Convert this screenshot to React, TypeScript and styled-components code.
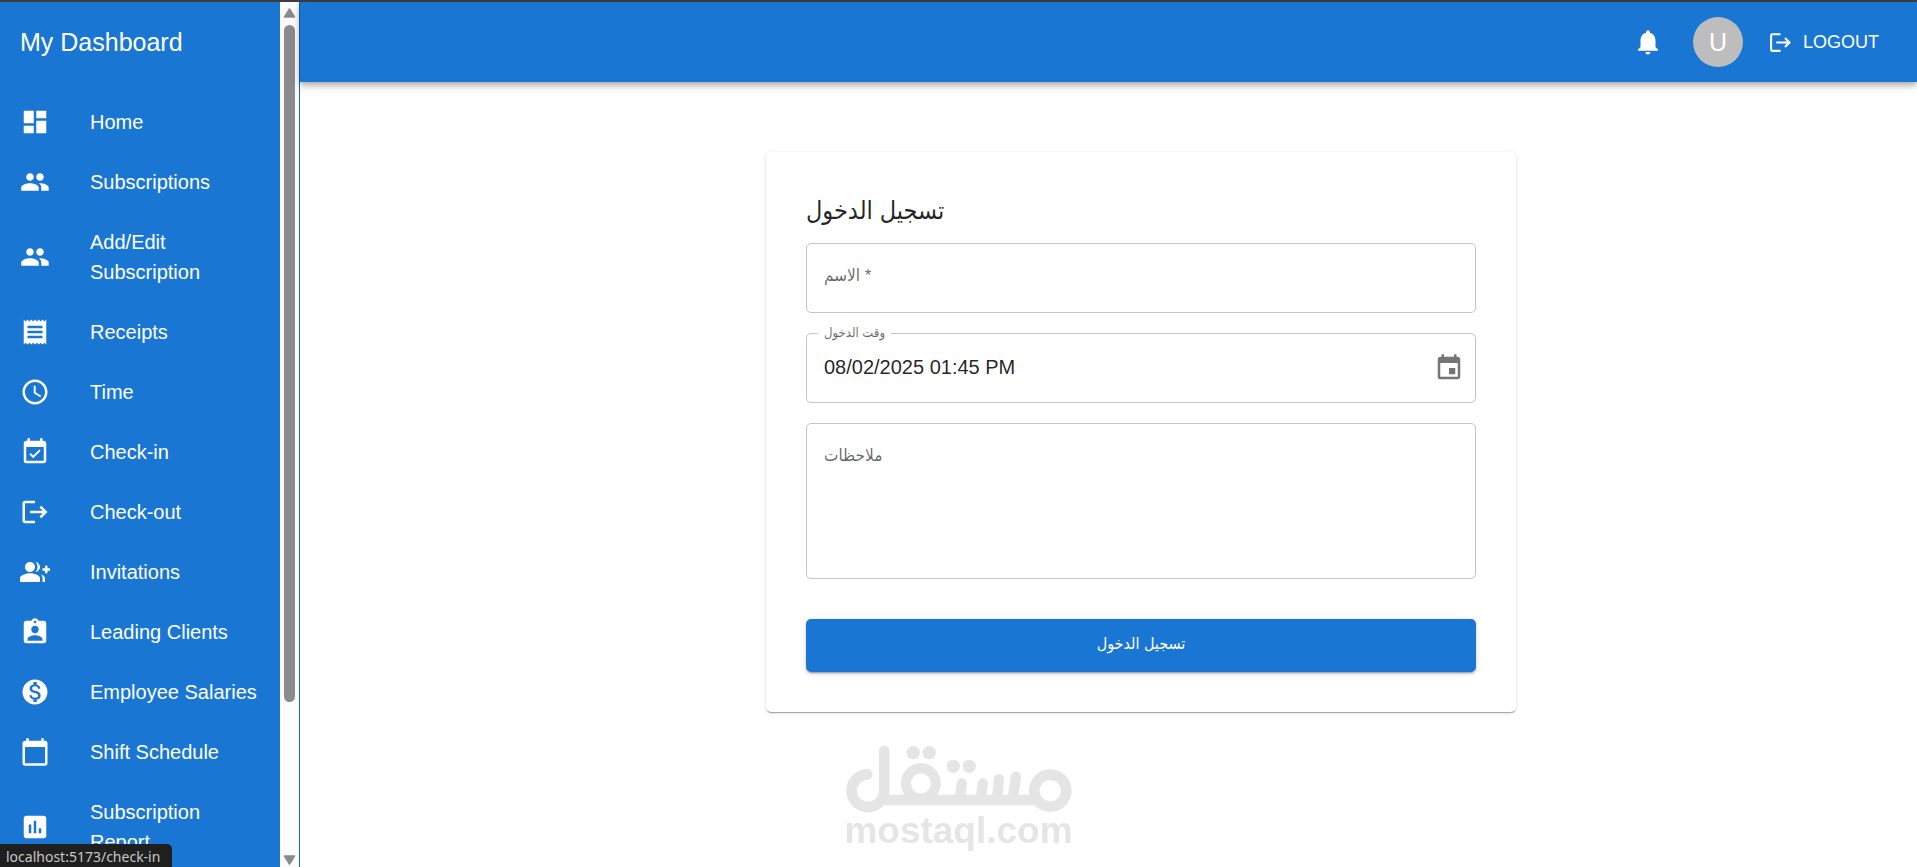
import React from 'react';
import styled, { createGlobalStyle } from 'styled-components';
import type { IconType } from 'react-icons';
import {
  MdAccessTime,
  MdAssessment,
  MdAssignmentInd,
  MdCalendarToday,
  MdDashboard,
  MdEvent,
  MdEventAvailable,
  MdGroupAdd,
  MdLogout,
  MdMonetizationOn,
  MdNotifications,
  MdPeople,
  MdReceipt,
} from 'react-icons/md';

const blue = '#1976d2';
const latin = '"Liberation Sans", Arial';
const arabic = '"DejaVu Sans Condensed", "DejaVu Sans"';

const GlobalStyle = createGlobalStyle`
  *, *::before, *::after { box-sizing: border-box; }
  body {
    margin: 0;
    background: #fff;
    color: rgba(0, 0, 0, 0.87);
    font: 20px/30px ${latin}, ${arabic}, sans-serif;
  }
  button, input, textarea { font: inherit; color: inherit; }
`;

const Page = styled.div`
  display: flex;
  height: 100vh;
  border-top: 2px solid #3e3e3e;
`;

const Sidebar = styled.aside`
  display: flex;
  flex: 0 0 300px;
  overflow: hidden;
  border-right: 1px solid #1565c0;
  background: ${blue};
  color: #fff;
`;

const SidebarContent = styled.div`
  flex: 1;
  min-width: 0;
  overflow: hidden;
`;

const Brand = styled.h1`
  display: flex;
  align-items: center;
  height: 80px;
  margin: 0;
  padding: 0 20px;
  font-size: 25px;
  font-weight: 400;
`;

const NavList = styled.ul`
  margin: 0;
  padding: 10px 0;
  list-style: none;
`;

const NavLink = styled.a`
  display: flex;
  align-items: center;
  padding: 15px 20px;
  color: inherit;
  text-decoration: none;
`;

const NavIcon = styled.span`
  display: flex;
  flex: 0 0 70px;
  font-size: 30px;
`;

const NavText = styled.span`
  flex: 1;
  min-width: 0;
`;

const ScrollTrack = styled.div`
  display: flex;
  flex: 0 0 19px;
  flex-direction: column;
  align-items: center;
  gap: 7px;
  padding: 6px 0 2px;
  background: #fcfcfc;
`;

const ScrollThumb = styled.div`
  width: 11px;
  height: 79%;
  margin-bottom: auto;
  border-radius: 6px;
  background: #8b8b8b;
`;

const Content = styled.div`
  display: flex;
  flex: 1;
  flex-direction: column;
  min-width: 0;
`;

const TopBar = styled.header`
  display: flex;
  flex: 0 0 80px;
  align-items: center;
  justify-content: flex-end;
  gap: 20px;
  padding-right: 28px;
  background: ${blue};
  color: #fff;
  box-shadow: 0 2px 5px -1px rgba(0, 0, 0, 0.2), 0 5px 6px 0 rgba(0, 0, 0, 0.14),
    0 1px 12px 0 rgba(0, 0, 0, 0.12);
`;

const IconButton = styled.button`
  display: flex;
  padding: 10px;
  border: 0;
  background: none;
  font-size: 30px;
  cursor: pointer;
`;

const Avatar = styled.div`
  display: flex;
  align-items: center;
  justify-content: center;
  width: 50px;
  height: 50px;
  border-radius: 50%;
  background: #bdbdbd;
  font-size: 25px;
`;

const LogoutButton = styled.button`
  display: flex;
  align-items: center;
  gap: 10px;
  padding: 5px 10px 5px 5px;
  border: 0;
  background: none;
  font-size: 18px;
  text-transform: uppercase;
  cursor: pointer;

  svg { font-size: 25px; }
`;

const Main = styled.main`
  display: flex;
  justify-content: center;
  align-items: flex-start;
  padding: 70px 0 0 65px;
`;

const Card = styled.form`
  display: flex;
  flex-direction: column;
  width: 100%;
  max-width: 750px;
  padding: 38px 40px 40px;
  border-radius: 5px;
  box-shadow: 0 2px 1px -1px rgba(0, 0, 0, 0.2), 0 1px 1px 0 rgba(0, 0, 0, 0.14),
    0 1px 4px 0 rgba(0, 0, 0, 0.12);
`;

const Title = styled.h2`
  margin: 0 0 13px;
  font-size: 25px;
  font-weight: 400;
  line-height: 40px;
`;

const Field = styled.div`
  position: relative;
  display: flex;
  align-items: center;
  height: 70px;
  margin-bottom: 20px;
  padding-right: 1px;
  border: 1px solid #c4c4c4;
  border-radius: 5px;
  color: rgba(0, 0, 0, 0.87);
`;

const NotesField = styled(Field)`
  height: 156px;
  margin-bottom: 40px;
`;

const Label = styled.label<{ $raised?: boolean }>`
  position: absolute;
  top: ${({ $raised }) => ($raised ? '-16px' : '17px')};
  left: ${({ $raised }) => ($raised ? '11px' : '17px')};
  padding: ${({ $raised }) => ($raised ? '0 6px' : '0')};
  background: #fff;
  color: rgba(0, 0, 0, 0.6);
  font-size: ${({ $raised }) => ($raised ? '13px' : '17px')};
  pointer-events: none;
`;

const Input = styled.input`
  flex: 1;
  min-width: 0;
  height: 100%;
  padding: 0 17px 2px;
  border: 0;
  outline: 0;
  background: none;
`;

const TextArea = styled.textarea`
  flex: 1;
  height: 100%;
  padding: 20px 17px;
  border: 0;
  outline: 0;
  background: none;
  resize: none;
`;

const DateButton = styled(IconButton)`
  color: rgba(0, 0, 0, 0.54);
`;

const SubmitButton = styled.button`
  height: 53px;
  padding: 0 20px 4px;
  border: 0;
  border-radius: 5px;
  background: ${blue};
  color: #fff;
  font-size: 16px;
  cursor: pointer;
  box-shadow: 0 4px 1px -3px rgba(0, 0, 0, 0.2), 0 2px 2px 0 rgba(0, 0, 0, 0.14),
    0 1px 6px 0 rgba(0, 0, 0, 0.12);
`;

const Watermark = styled.div`
  position: fixed;
  bottom: 18px;
  left: 50%;
  display: flex;
  flex-direction: column;
  align-items: center;
  transform: translateX(-50%);
  color: #e5e5e5;
  font-size: 37px;
  font-weight: 700;
  line-height: 36px;
  pointer-events: none;
`;

const StatusBubble = styled.div`
  position: fixed;
  bottom: 0;
  left: 0;
  height: 23px;
  padding: 0 12px 0 6px;
  border-radius: 0 5px 0 0;
  background: #1f1f1f;
  color: #c7c7c7;
  font: 14px/26px "Noto Sans", "Open Sans", sans-serif;
`;

const navItems: { text: string; path: string; icon: IconType }[] = [
  { text: 'Home', path: '/', icon: MdDashboard },
  { text: 'Subscriptions', path: '/subscriptions', icon: MdPeople },
  { text: 'Add/Edit Subscription', path: '/subscriptions/edit', icon: MdPeople },
  { text: 'Receipts', path: '/receipts', icon: MdReceipt },
  { text: 'Time', path: '/time', icon: MdAccessTime },
  { text: 'Check-in', path: '/check-in', icon: MdEventAvailable },
  { text: 'Check-out', path: '/check-out', icon: MdLogout },
  { text: 'Invitations', path: '/invitations', icon: MdGroupAdd },
  { text: 'Leading Clients', path: '/leading-clients', icon: MdAssignmentInd },
  { text: 'Employee Salaries', path: '/salaries', icon: MdMonetizationOn },
  { text: 'Shift Schedule', path: '/shifts', icon: MdCalendarToday },
  { text: 'Subscription Report', path: '/reports', icon: MdAssessment },
];

const ScrollArrow = ({ down }: { down?: boolean }) => (
  <svg width="13" height="10" viewBox="0 0 13 10" aria-hidden="true">
    <path
      d={down ? 'M1.5 1h10L6.5 9z' : 'M1.5 9h10L6.5 1z'}
      fill="#8b8b8b"
      stroke="#8b8b8b"
      strokeWidth="1.5"
      strokeLinejoin="round"
    />
  </svg>
);

const MostaqlLogo = () => (
  <svg width="226" height="68" viewBox="45 46 678 204" fill="none" stroke="currentColor" aria-hidden="true">
    <path d="M109 134A49 49 0 1 0 160 183V64" strokeWidth="32" strokeLinecap="round" />
    <path d="M150 211H630" strokeWidth="32" />
    <circle cx="270" cy="161" r="45" strokeWidth="30" />
    <circle cx="658" cy="183" r="48" strokeWidth="32" />
    <path d="M393 161L387 202M456 161L450 202M504 149L499 202M555 141L546 202" strokeWidth="31" strokeLinecap="round" />
    <g fill="currentColor" stroke="none">
      <circle cx="247" cy="69" r="20" />
      <circle cx="295" cy="69" r="20" />
      <circle cx="367" cy="110" r="20" />
      <circle cx="415" cy="110" r="20" />
    </g>
  </svg>
);

export default function App() {
  return (
    <>
      <GlobalStyle />
      <Page>
        <Sidebar>
          <SidebarContent>
            <Brand>My Dashboard</Brand>
            <nav>
              <NavList>
                {navItems.map(({ text, path, icon: Icon }) => (
                  <li key={path}>
                    <NavLink href={path}>
                      <NavIcon>
                        <Icon />
                      </NavIcon>
                      <NavText>{text}</NavText>
                    </NavLink>
                  </li>
                ))}
              </NavList>
            </nav>
          </SidebarContent>
          <ScrollTrack>
            <ScrollArrow />
            <ScrollThumb />
            <ScrollArrow down />
          </ScrollTrack>
        </Sidebar>
        <Content>
          <TopBar>
            <IconButton type="button" aria-label="Notifications">
              <MdNotifications />
            </IconButton>
            <Avatar>U</Avatar>
            <LogoutButton type="button">
              <MdLogout />
              Logout
            </LogoutButton>
          </TopBar>
          <Main>
            <Card onSubmit={(event) => event.preventDefault()}>
              <Title>تسجيل الدخول</Title>
              <Field>
                <Label htmlFor="name">الاسم *</Label>
                <Input id="name" type="text" required />
              </Field>
              <Field>
                <Label htmlFor="time" $raised>
                  وقت الدخول
                </Label>
                <Input id="time" type="text" defaultValue="08/02/2025 01:45 PM" />
                <DateButton type="button" aria-label="Choose date">
                  <MdEvent />
                </DateButton>
              </Field>
              <NotesField>
                <Label htmlFor="notes">ملاحظات</Label>
                <TextArea id="notes" />
              </NotesField>
              <SubmitButton type="submit">تسجيل الدخول</SubmitButton>
            </Card>
          </Main>
        </Content>
      </Page>
      <Watermark>
        <MostaqlLogo />
        mostaql.com
      </Watermark>
      <StatusBubble>localhost:5173/check-in</StatusBubble>
    </>
  );
}
